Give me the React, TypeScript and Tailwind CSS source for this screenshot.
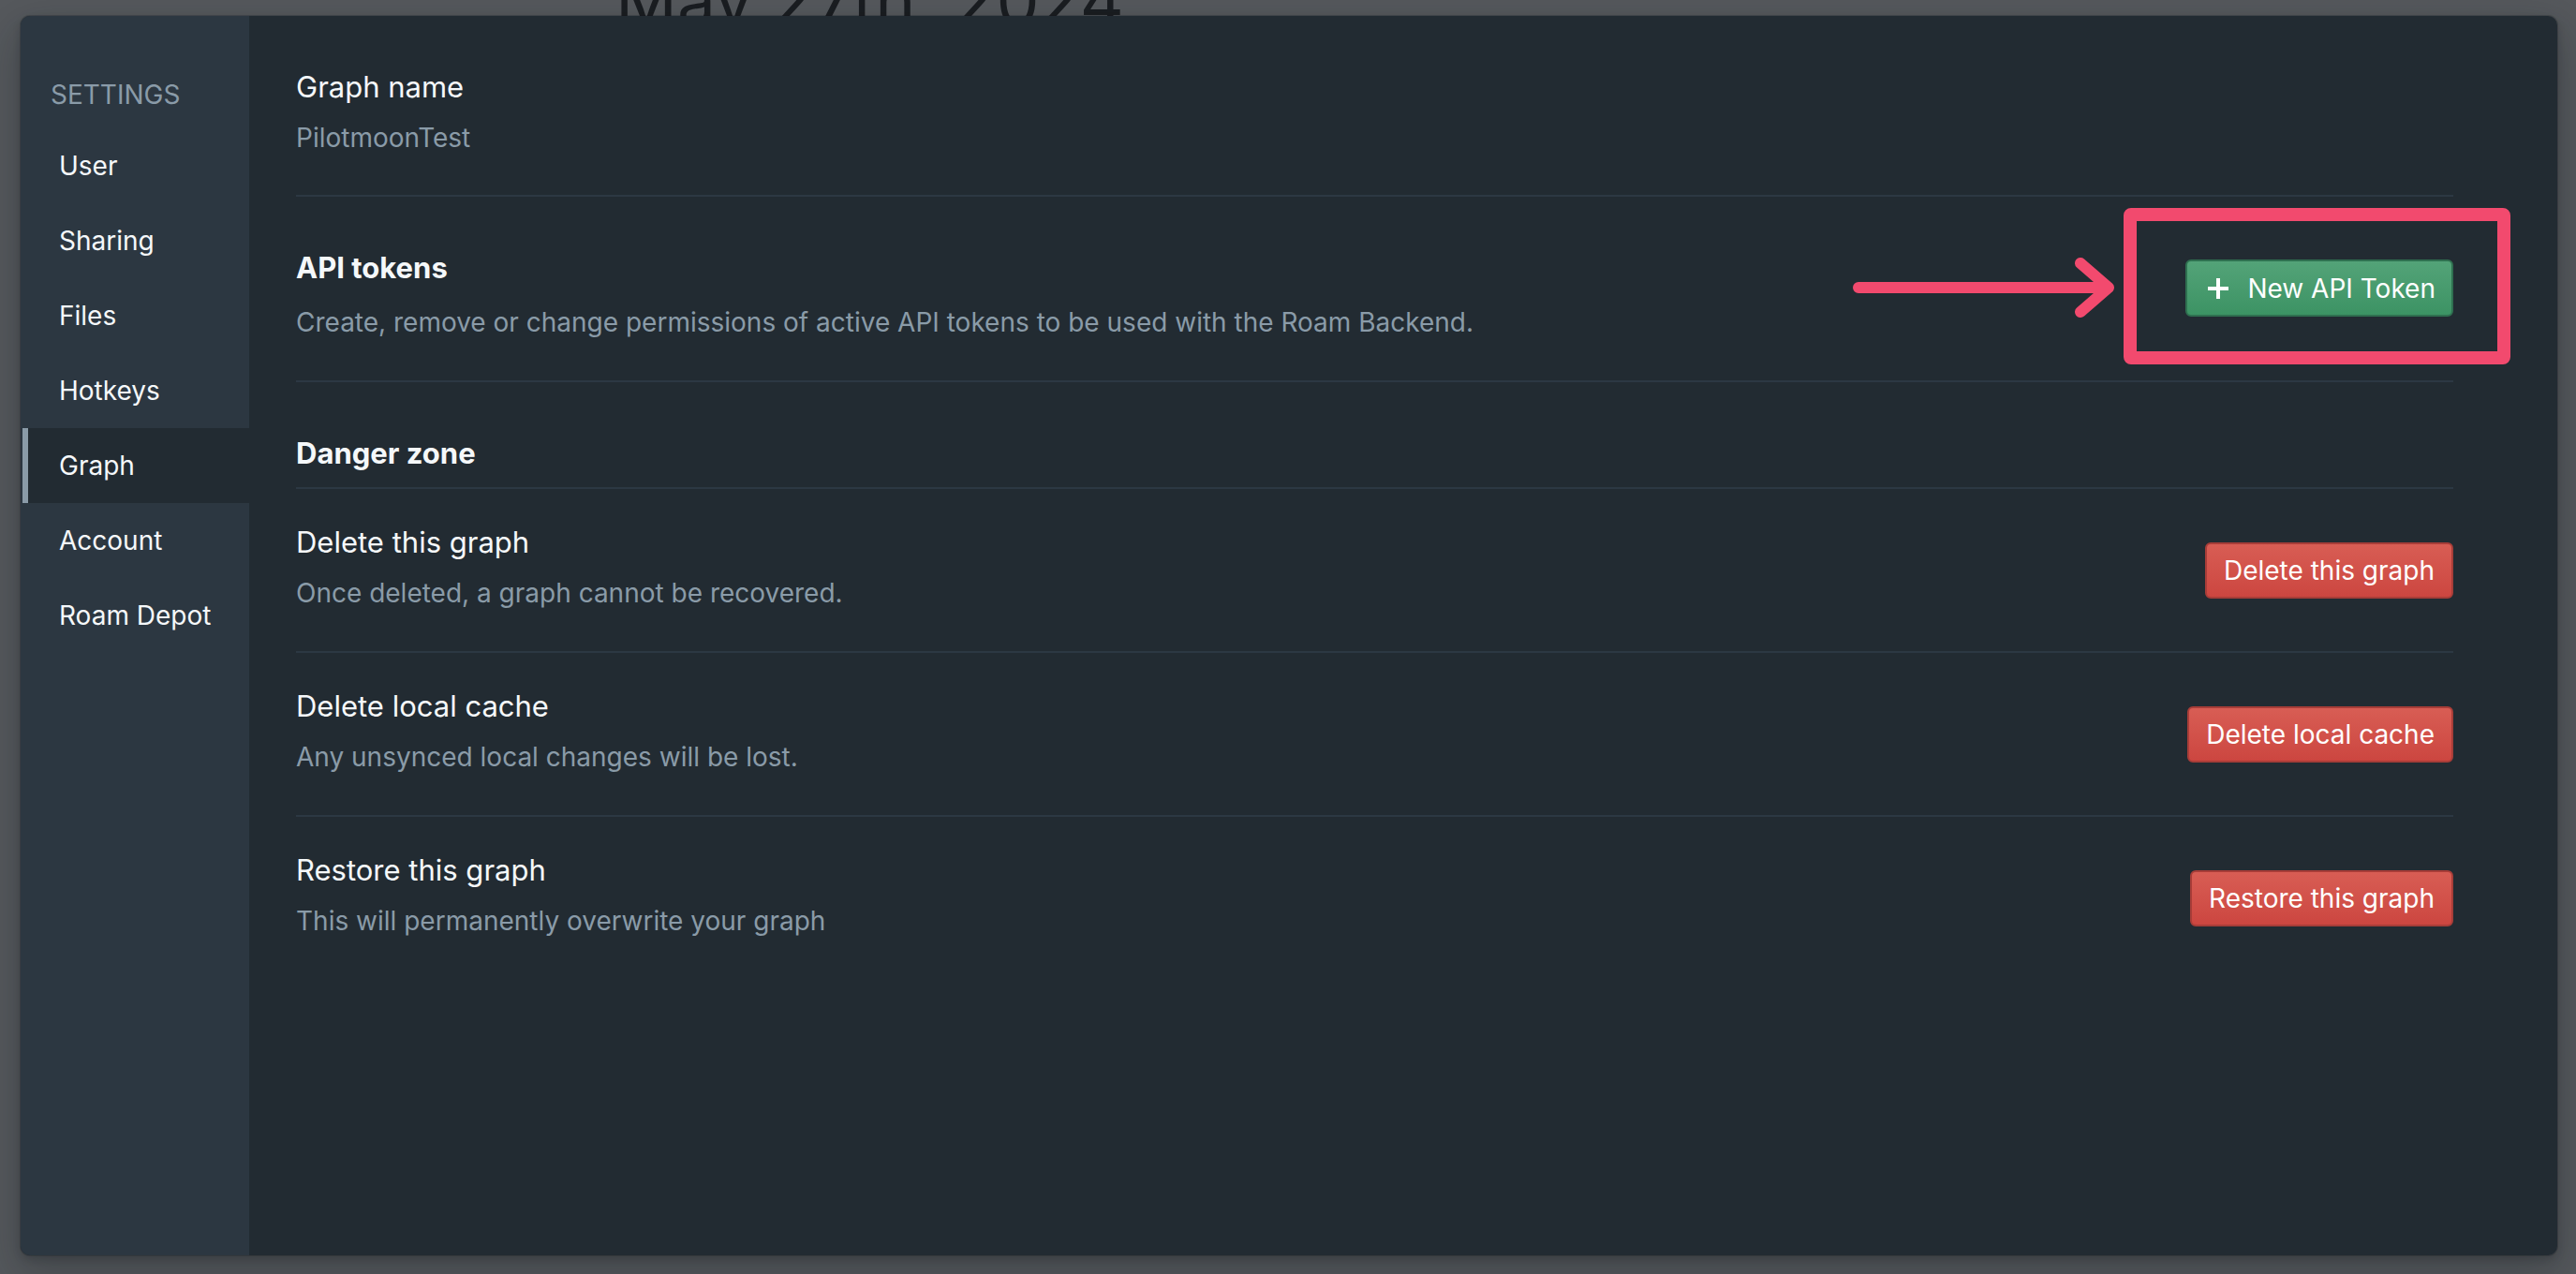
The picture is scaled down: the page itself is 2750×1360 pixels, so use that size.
import React from "react"

const navItems = ["User", "Sharing", "Files", "Hotkeys", "Graph", "Account", "Roam Depot"]

const dangerRows = [
  {
    title: "Delete this graph",
    desc: "Once deleted, a graph cannot be recovered.",
    action: "Delete this graph",
  },
  {
    title: "Delete local cache",
    desc: "Any unsynced local changes will be lost.",
    action: "Delete local cache",
  },
  {
    title: "Restore this graph",
    desc: "This will permanently overwrite your graph",
    action: "Restore this graph",
  },
]

function DangerButton({ label }: { label: string }) {
  return (
    <button className="mt-[20px] h-[60px] shrink-0 rounded-[6px] border-2 border-[#a83d38] bg-gradient-to-b from-[#d85d54] to-[#cc4640] px-[18px] text-[28px] leading-none text-white">
      {label}
    </button>
  )
}

export default function App() {
  return (
    <div
      className="relative h-screen w-full overflow-hidden bg-[#56595d] pt-[17px] pr-[20px] pb-[20px] pl-[22px]"
      style={{ fontFamily: 'Inter, "Noto Sans", sans-serif' }}
    >
      {/* page title behind the modal */}
      <h1 className="absolute left-[657px] top-[-36px] text-[73px] leading-none text-[#1a1d21]">
        May 27th, 2024
      </h1>

      {/* Settings dialog */}
      <div className="relative flex h-full overflow-hidden rounded-[10px] bg-[#222b32] shadow-[0_0_0_1px_rgba(16,22,26,0.2),0_4px_8px_rgba(16,22,26,0.2),0_18px_46px_6px_rgba(16,22,26,0.25)]">
        <aside className="w-[244px] shrink-0 bg-[#2c3741] pt-[66px]">
          <div className="mb-[18px] pl-[32px] text-[28px] uppercase leading-[36px] text-[#8a9ba8]">
            Settings
          </div>
          {navItems.map((item) => (
            <div
              key={item}
              className={`ml-[2px] flex h-[80px] items-center border-l-[6px] pl-[33px] text-[28px] text-[#f5f8fa] ${
                item === "Graph" ? "border-[#8a9ba8] bg-[#222b32]" : "border-transparent"
              }`}
            >
              {item}
            </div>
          ))}
        </aside>

        <main className="flex-1 pt-[56px] pr-[111px] pl-[50px]">
          {/* Graph name */}
          <section className="border-b-2 border-[#2c3843] pb-[41px]">
            <div className="text-[31px] leading-[40px] text-[#f5f8fa]">Graph name</div>
            <div className="mt-[14px] text-[28px] leading-[40px] text-[#8a9ba8]">PilotmoonTest</div>
          </section>

          {/* API tokens */}
          <section className="flex items-start justify-between border-b-2 border-[#2c3843] pt-[56px] pb-[42px]">
            <div>
              <div className="text-[31px] font-bold leading-[40px] text-[#f5f8fa]">API tokens</div>
              <div className="mt-[18px] text-[28px] leading-[40px] text-[#8a9ba8]">
                Create, remove or change permissions of active API tokens to be used with the Roam Backend.
              </div>
            </div>
            <div className="relative mt-[11px]">
              <svg
                className="pointer-events-none absolute left-[-355px] top-[-5px]"
                width="290"
                height="70"
                viewBox="0 0 290 70"
                fill="none"
              >
                <path
                  d="M6 35 H272 M243 9 L273 35 L243 61"
                  stroke="#f24a6e"
                  strokeWidth="12"
                  strokeLinecap="round"
                  strokeLinejoin="round"
                />
              </svg>
              <div className="pointer-events-none absolute -top-[55px] -right-[61px] -bottom-[51px] -left-[66px] rounded-[8px] border-[14px] border-[#f24a6e]" />
              <button className="flex h-[61px] items-center gap-[20px] rounded-[6px] border-2 border-[#2f7050] bg-gradient-to-b from-[#53a378] to-[#3c9364] pr-[17px] pl-[22px] text-[28px] leading-none text-white">
                <svg width="22" height="22" viewBox="0 0 22 22">
                  <path d="M11 0 V22 M0 11 H22" stroke="white" strokeWidth="4" />
                </svg>
                New API Token
              </button>
            </div>
          </section>

          {/* Danger zone */}
          <section className="border-b-2 border-[#2c3843] pt-[56px] pb-[16px]">
            <div className="text-[31px] font-bold leading-[40px] text-[#f5f8fa]">Danger zone</div>
          </section>

          {dangerRows.map((row, i) => (
            <section
              key={row.title}
              className={`flex items-start justify-between pt-[37px] pb-[42px] ${
                i < dangerRows.length - 1 ? "border-b-2 border-[#2c3843]" : ""
              }`}
            >
              <div>
                <div className="text-[31px] leading-[40px] text-[#f5f8fa]">{row.title}</div>
                <div className="mt-[14px] text-[28px] leading-[40px] text-[#8a9ba8]">{row.desc}</div>
              </div>
              <DangerButton label={row.action} />
            </section>
          ))}
        </main>
      </div>
    </div>
  )
}
